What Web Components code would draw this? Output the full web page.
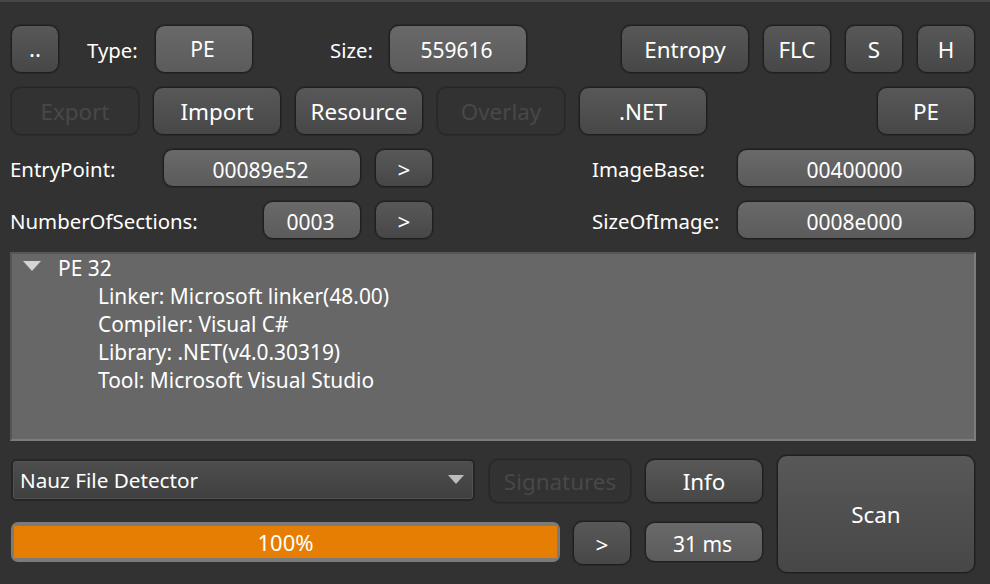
<!DOCTYPE html>
<html><head><meta charset="utf-8">
<style>
html,body{margin:0;padding:0;background:#323232}
body{width:990px;height:584px;overflow:hidden;font:22px/1 "Noto Sans","Open Sans","Liberation Sans",sans-serif;color:#fff}
</style></head><body>
<die-app></die-app>
<script>
function def(name, css, html){
  const t=document.createElement('template');
  t.innerHTML='<style>'+css+'</style>'+html;
  customElements.define(name, class extends HTMLElement{
    constructor(){super();this.attachShadow({mode:'open'}).appendChild(t.content.cloneNode(true));}
    connectedCallback(){
      const w=this.getAttribute('w'),h=this.getAttribute('h');
      if(w)this.style.width=w+'px';
      if(h)this.style.height=h+'px';
    }
  });
}
const btnBase=`:host{display:flex;align-items:center;justify-content:center;box-sizing:border-box;flex:none;height:48px;border:1px solid #1f1f1f;box-shadow:0 0 0 1px #292929;border-radius:10px;white-space:nowrap}
span{display:block;position:relative;top:var(--t,1px)}`;
def('d-btn',btnBase+`:host{background:linear-gradient(#585858,#474747);color:#fff;font-size:22.4px}
:host([disabled]){background:#323232;color:#484848;border-color:#272727;box-shadow:0 0 0 1px #2c2c2c}`,'<span><slot></slot></span>');
def('d-field',btnBase+`:host{background:linear-gradient(#696969,#5b5b5b);color:#fff;font-size:21px;padding-right:3px}`,'<span><slot></slot></span>');
def('d-label',`:host{display:block;flex:none;white-space:nowrap;font-size:20.4px;position:relative;top:1px}`,'<slot></slot>');
def('d-row',`:host{display:flex;align-items:center;flex:none}`,'<slot></slot>');
def('d-tree',`:host{display:block;box-sizing:border-box;width:966px;height:189px;margin:13px 0 0 -1px;background:#676767;border:2px solid #565656;border-bottom-color:#7d7d7d;border-right-color:#7d7d7d;color:#fff;font-size:20.9px}
.r{height:28px;line-height:28px;white-space:nowrap}
.top{padding-left:46px;position:relative}
.c{padding-left:86px}
svg{position:absolute;left:11px;top:7px}`,
`<div class="r top"><svg width="18" height="10" viewBox="0 0 18 10"><path d="M0 0H18L9 10Z" fill="#d4d4d4"/></svg>PE 32</div>
<div class="r c">Linker: Microsoft linker(48.00)</div>
<div class="r c">Compiler: Visual C#</div>
<div class="r c">Library: .NET(v4.0.30319)</div>
<div class="r c">Tool: Microsoft Visual Studio</div>`);
def('d-combo',`:host{display:flex;align-items:center;box-sizing:border-box;flex:none;width:464px;height:42px;background:linear-gradient(#4e4e4e,#3f3f3f);border:2px solid #262626;box-shadow:inset 0 0 0 1px #515151;border-radius:5px;padding:0 9px 0 7px;font-size:20.7px}
span{flex:1}`,`<span><slot></slot></span><svg width="16" height="10" viewBox="0 0 16 10"><path d="M0 0H16L8 9Z" fill="#bdbdbd"/></svg>`);
def('d-progress',`:host{display:flex;box-sizing:border-box;flex:none;width:549px;height:40px;border-radius:7px;background:#7b7b7b;padding:4px 3px}
div{flex:1;background:#e57e03;display:flex;align-items:center;justify-content:center;font-size:22px;color:#fff}`,`<div><slot></slot></div>`);
def('die-app',`:host{display:flex;flex-direction:column;width:990px;height:584px;box-sizing:border-box;padding:23px 0 0 11px;border-top:2px solid #484848}
.gap{margin-top:14px}
.bottom{display:flex;margin-top:14px}
.left{display:grid;grid-template-columns:464px 142px 118px;column-gap:14px;align-items:start;width:752px;margin-top:4px}
.left2{display:flex;align-items:flex-start;margin-top:18px}
`,`
<d-row>
  <d-btn w="48" style="--t:0px">..</d-btn><d-label style="margin-left:28px;width:68px">Type:</d-label>
  <d-field w="98" style="--t:0px">PE</d-field>
  <d-label style="margin-left:77px;width:59px">Size:</d-label>
  <d-field w="138">559616</d-field>
  <d-btn w="128" style="margin-left:94px">Entropy</d-btn>
  <d-btn w="68" style="margin-left:14px">FLC</d-btn>
  <d-btn w="58" style="margin-left:14px">S</d-btn>
  <d-btn w="58" style="margin-left:14px">H</d-btn>
</d-row>
<d-row class="gap">
  <d-btn w="128" disabled>Export</d-btn>
  <d-btn w="128" style="margin-left:14px">Import</d-btn>
  <d-btn w="128" style="margin-left:14px">Resource</d-btn>
  <d-btn w="128" style="margin-left:14px" disabled>Overlay</d-btn>
  <d-btn w="128" style="margin-left:14px">.NET</d-btn>
  <d-btn w="98" style="margin-left:170px">PE</d-btn>
</d-row>
<d-row class="gap" style="margin-left:-1px">
  <d-label style="width:153px">EntryPoint:</d-label>
  <d-field w="198" h="38" style="--t:2px">00089e52</d-field>
  <d-btn w="58" h="38" style="margin-left:14px;--t:2px">&gt;</d-btn>
  <d-label style="margin-left:159px;width:145px">ImageBase:</d-label>
  <d-field w="238" h="38" style="--t:2px">00400000</d-field>
</d-row>
<d-row class="gap" style="margin-left:-1px">
  <d-label style="width:253px">NumberOfSections:</d-label>
  <d-field w="98" h="38" style="--t:2px">0003</d-field>
  <d-btn w="58" h="38" style="margin-left:14px;--t:2px">&gt;</d-btn>
  <d-label style="margin-left:159px;width:145px">SizeOfImage:</d-label>
  <d-field w="238" h="38" style="--t:2px">0008e000</d-field>
</d-row>
<d-tree></d-tree>
<div class="bottom">
  <div>
    <div class="left">
      <d-combo>Nauz File Detector</d-combo>
      <d-btn w="142" h="44" disabled>Signatures</d-btn>
      <d-btn w="118" h="44">Info</d-btn>
    </div>
    <div class="left2">
      <d-progress style="margin-top:1px">100%</d-progress>
      <d-btn w="58" h="44" style="margin-left:13px;--t:2px">&gt;</d-btn>
      <d-field w="118" h="40" style="margin-left:14px;margin-top:1px;--t:2px">31 ms</d-field>
    </div>
  </div>
  <d-btn w="198" h="118" style="margin-left:14px">Scan</d-btn>
</div>`);
</script>
</body></html>
